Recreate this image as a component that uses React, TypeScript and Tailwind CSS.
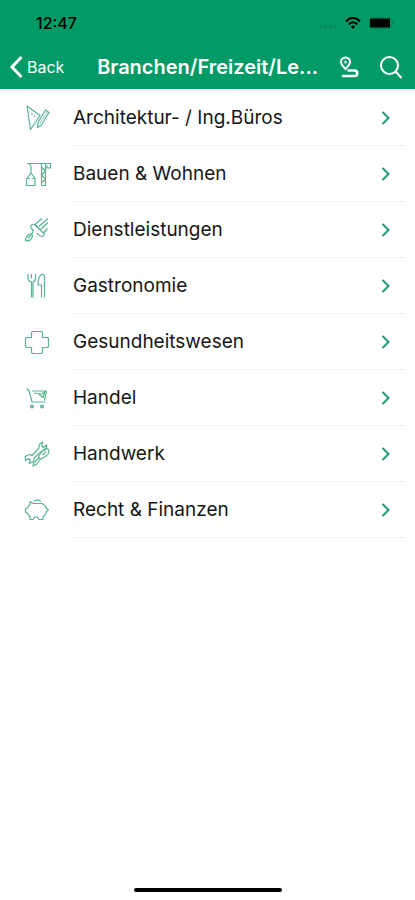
import type { ReactNode } from 'react';

type Category = {
  name: string;
  icon: ReactNode;
};

const categories: Category[] = [
  {
    name: 'Architektur- / Ing.Büros',
    icon: (
      <>
        <path d="M6 4 19 13.500 9.500 27.500Z" />
        <path d="M11 11v2M13.500 13.500v1.500" />
        <path d="m24.500 8 3.500 2.500-7.500 12.500-4 2.500.5-5Z" />
        <path d="m26 10-7.500 12" strokeWidth="0.7" />
      </>
    ),
  },
  {
    name: 'Bauen & Wohnen',
    icon: (
      <>
        <path d="M6 5.500h23.500v4.500h-3.500V7.500" />
        <path d="M8 5.500 10 8v7M10 15l-4 5.500M10 15l4 5.500" />
        <path d="M9 20.500H5.500v7H14v-7h-3" />
        <path d="M20.500 5v22.500h4V5M20.500 9l4 4-4 4 4 4-4 4" />
      </>
    ),
  },
  {
    name: 'Dienstleistungen',
    icon: (
      <>
        <path d="M10.500 20c-3-.5-5.500 2-6 6.500 3.500 1 6.500-1 7-5ZM7 24l3-3" strokeWidth="1.300" />
        <path d="m11 20 1.500-3.500-2.500-2.500c-1-2 1-4.500 3.500-3.500l10 9.500-2 2.500c-2.500 0-4-1-5.500-3.500" />
        <path d="m14 10.500 7-6M14.500 10.500l4 5M18 12.500l9-8M19.500 15.500l7.500-7M22 19.500l4.500-5" />
      </>
    ),
  },
  {
    name: 'Gastronomie',
    icon: (
      <>
        <path d="M7 4v4.500c0 2 1.500 3 3.500 3.500v15.500M14.500 4v4.500c0 2-1 3-2.500 3.500v15.500M10.500 4v4.500" />
        <path d="M23.500 27.500V6.500c0-1.500-1-2.500-3-2-2.500 1.500-3.500 5-3.500 10.500h3.500v12.500" />
      </>
    ),
  },
  {
    name: 'Gesundheitswesen',
    icon: <path d="M11.500 5.500h9l1 1v5h5l1 1v8l-1 1h-5v5l-1 1h-9l-1-1v-5h-5l-1-1v-8l1-1h5v-5Z" />,
  },
  {
    name: 'Handel',
    icon: (
      <>
        <path d="M5.500 6.500 8 8.500l3 11.500h13.500" />
        <path d="M11 9h14.500l-2 9.500M13 11l8 1 3-2.500-2 6-4-3" />
        <circle cx="11" cy="24.500" r="1.300" strokeWidth="1.500" />
        <circle cx="21" cy="24.500" r="1.300" strokeWidth="1.500" />
      </>
    ),
  },
  {
    name: 'Handwerk',
    icon: (
      <>
        <path d="M4 18.500 7.500 17c1.500-.500 3 0 3.500.500L18 10c-.500-3 1-5.500 4-6L20.500 7.500 22.500 9.500 25.500 7c1 3-1 5.500-4.500 6L13 20c.500 3-1.500 5-5 5.500l1.500-3-2-2-3 2Z" />
        <path d="m18 18 4-6c2-2.500 6-1.500 6 1 0 2.500-1.500 4-3.500 5.500L20 21l-2.500-1.500ZM18 20l-5 4.500-1 3.500 4-2 3.500-5M25 13.500l-3.500 3.500" />
      </>
    ),
  },
  {
    name: 'Recht & Finanzen',
    icon: (
      <>
        <path d="M9 7.500 12 9.500h9c2.500 1 4 3 4.500 5l2 1.500-2 1.500c-.500 2.500-1.500 4-3.500 5.500v2.500h-4L16.500 23h-3L12 25.500H9V22.500c-1.500-1-2-2-2.500-3L4.500 18v-3.500l2-.500c.500-1.500 1-2.500 2.500-3.500Z" />
        <path d="M13 7.500c2-1.500 5-1.500 7 0" />
      </>
    ),
  },
];

function StatusBar() {
  return (
    <div className="flex h-11 items-center justify-between pt-0.5 pr-5 pl-9 text-black">
      <span className="text-base leading-5 font-medium">12:47</span>
      <div className="flex items-center gap-2">
        <svg className="h-3 w-[18px]" viewBox="0 0 18 12" fill="#0c8257" aria-hidden="true">
          <path d="M0 9h3v2H0zM5 9h3v2H5zM10 9h3v2h-3zM15 9h3v2h-3z" />
        </svg>
        <svg className="h-3 w-4" viewBox="0 0 16 12" fill="none" stroke="currentColor" strokeWidth="2" aria-hidden="true">
          <path d="M1 4.500C5-.200 11-.200 15 4.500M3.700 7.500c2.500-3 6.100-3 8.600 0" />
          <path d="M5.800 9.500c1.400-1.300 3-1.300 4.400 0L8 12Z" fill="currentColor" stroke="none" />
        </svg>
        <svg className="h-3 w-[26px]" viewBox="0 0 26 12" aria-hidden="true">
          <rect x=".5" y=".5" width="22" height="11" rx="2" fill="none" stroke="#068358" />
          <rect x="1" y="1.500" width="20" height="9" rx="1" />
          <path d="M23.500 4c1.500.500 1.500 3.500 0 4Z" fill="#087044" />
        </svg>
      </div>
    </div>
  );
}

function NavBar() {
  return (
    <div className="flex h-[45px] items-center pr-3 pl-2 text-white">
      <button className="flex shrink-0 items-center gap-[3px] text-base">
        <svg className="h-6 w-4" viewBox="0 0 16 24" fill="none" stroke="currentColor" strokeWidth="3" aria-hidden="true">
          <path d="M13.500 2 4 12l9.500 10" />
        </svg>
        Back
      </button>
      <h1 className="min-w-0 flex-1 pl-3 text-center text-xl leading-7 font-semibold whitespace-nowrap">
        Branchen/Freizeit/Le...
      </h1>
      <div className="flex shrink-0 items-center gap-5">
        <button aria-label="Karte">
          <svg className="h-6 w-5" viewBox="0 0 20 24" fill="none" stroke="currentColor" strokeWidth="2" aria-hidden="true">
            <path d="M6.500 14C3.500 11 2 9 2 7a4.500 4.500 0 0 1 9 0c0 2-1.500 4-4.500 7Z" />
            <circle cx="6.500" cy="7" r="1" strokeWidth="1" />
            <path d="M9.500 15.500h6a2.750 2.750 0 0 1 0 5.500H4" strokeWidth="2.500" strokeLinecap="round" />
          </svg>
        </button>
        <button aria-label="Suche">
          <svg className="size-6" viewBox="0 0 24 24" fill="none" stroke="currentColor" strokeWidth="2" aria-hidden="true">
            <circle cx="10.500" cy="10.500" r="8.500" />
            <path d="m16.500 16.500 6 6.500" />
          </svg>
        </button>
      </div>
    </div>
  );
}

function CategoryRow({ name, icon }: Category) {
  return (
    <li className="pr-2.5 pl-[21px]">
      <button className="flex h-14 w-full items-center text-left">
        <svg
          className="mr-5 size-8 shrink-0"
          viewBox="0 0 32 32"
          fill="none"
          stroke="#58b590"
          strokeWidth="1.200"
          strokeLinejoin="round"
          aria-hidden="true"
        >
          {icon}
        </svg>
        <span className="flex h-14 flex-1 items-center justify-between border-b border-[#efefef] pr-3.5">
          <span className="text-[19px] leading-6">{name}</span>
          <svg className="h-4 w-2.5" viewBox="0 0 10 16" fill="none" stroke="#209b70" strokeWidth="2" aria-hidden="true">
            <path d="m1.500 2 6 6-6 6" />
          </svg>
        </span>
      </button>
    </li>
  );
}

export default function App() {
  return (
    <div className="flex min-h-screen flex-col bg-white font-['Inter',sans-serif] text-[#161616]">
      <header className="bg-[#029a66]">
        <StatusBar />
        <NavBar />
      </header>
      <main className="flex-1 pt-px">
        <ul>
          {categories.map((c) => (
            <CategoryRow key={c.name} name={c.name} icon={c.icon} />
          ))}
        </ul>
      </main>
      <footer className="flex justify-center pb-2">
        <div className="h-1 w-[148px] rounded-full bg-black" />
      </footer>
    </div>
  );
}
